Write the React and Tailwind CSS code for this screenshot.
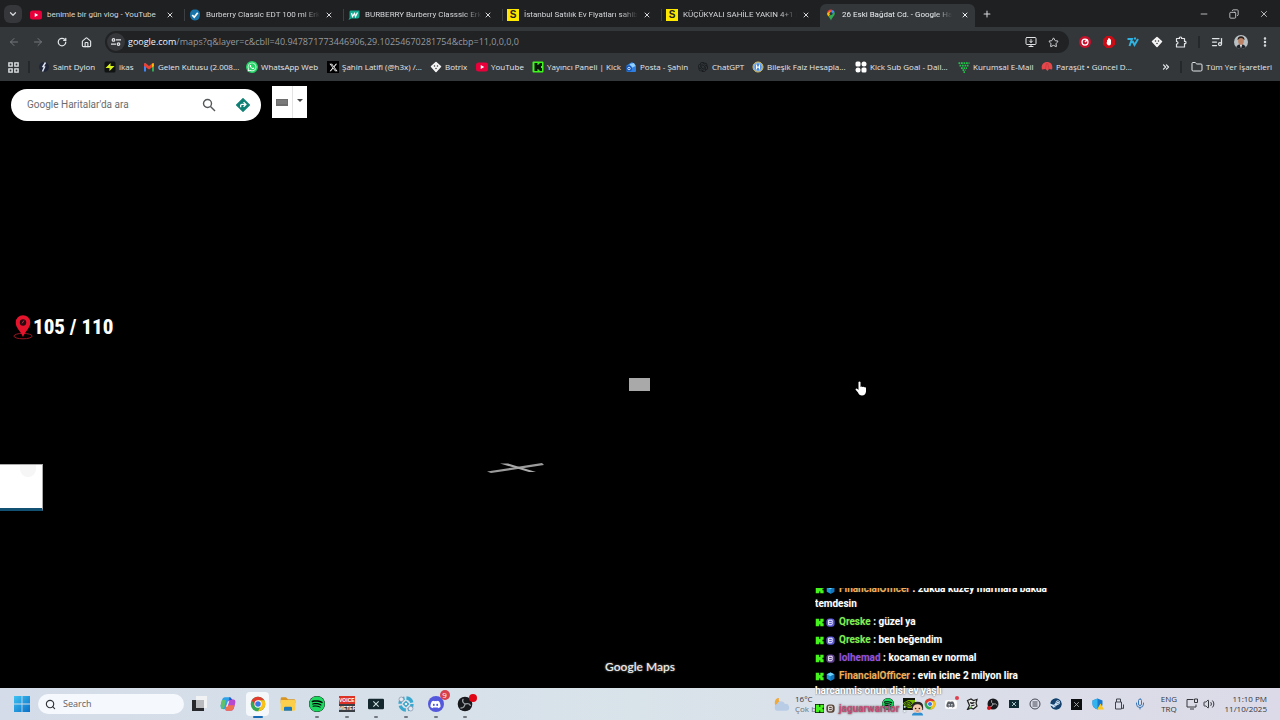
import {
  ArrowLeft, ArrowRight, ChevronDown, ChevronsRight, Copy, Folder, House, ListMusic, Mic, Minus,
  MonitorDown, EllipsisVertical, Plus, RotateCw, Search, Star, Volume2, X,
} from "lucide-react";
import { FaXTwitter, FaDiscord, FaSpotify, FaSteam, FaWhatsapp } from "react-icons/fa6";
import { SiOpenai, SiNvidia } from "react-icons/si";

function YouTubeIcon({ className = "size-3" }) {
  return (
    <svg viewBox="0 0 24 24" className={className}>
      <rect x="0" y="3" width="24" height="18" rx="5" fill="#e8003a" />
      <path d="M9.5 8v8l7-4z" fill="#fff" />
    </svg>
  );
}

function KickIcon({ className = "size-3", boxed = false }) {
  return (
    <svg viewBox="0 0 24 24" className={className}>
      {boxed && <rect width="24" height="24" fill="#0b0f0b" />}
      <path d="M2 2h9v6h3V2h9v8h-3v4h3v8h-9v-5h-3v5H2z" fill="#45f41c" />
    </svg>
  );
}

function KickTileIcon() {
  return (
    <svg viewBox="0 0 24 24" className="size-3">
      <rect x="1" y="1" width="22" height="22" rx="2" fill="#3ef51c" />
      <path d="M5 4h6v4h2V6h2V4h5v6h-2v4h2v6h-5v-2h-2v-2h-2v4H5z" fill="#0a160a" />
    </svg>
  );
}

function TickIcon() {
  return (
    <svg viewBox="0 0 24 24" className="size-3">
      <path d="M12 1c7 0 10 4 10 10s-3 12-10 12S2 17 2 11 5 1 12 1z" fill="#1873a8" />
      <path d="M6.500 12l4 4.500 7-9" fill="none" stroke="#fff" strokeWidth="3.500" />
    </svg>
  );
}

function WatsonsIcon() {
  return (
    <svg viewBox="0 0 24 24" className="size-3">
      <path d="M5 3h18v12q0 4-4 4H7l-6 3 2-5V6q0-3 2-3z" fill="#15a88f" />
      <path d="M7 8l2 7 4-6 2 6 4-8" fill="none" stroke="#fff" strokeWidth="2.500" />
    </svg>
  );
}

function SahibindenIcon() {
  return (
    <span className="flex size-3 items-center justify-center bg-[#ffe800] font-['Liberation_Sans'] text-[10px] leading-none font-bold text-[#222]">
      S
    </span>
  );
}

function MapsPinIcon() {
  return (
    <svg viewBox="0 0 24 24" className="size-3">
      <path d="M12 1C7 1 4 5 4 9l4 2 7-9q-1-1-3-1z" fill="#e94435" />
      <path d="M15 2L9 9l4 2 6-5q-1-3-4-4z" fill="#4a90f0" />
      <path d="M4 9q0 3 3 6l7-9-5-1z" fill="#fbbc04" />
      <path d="M19 6c3 6-4 9-7 17-1-3-3-5-5-8z" fill="#34a853" />
      <circle cx="12" cy="9" r="3" fill="#24334e" />
    </svg>
  );
}

function SparkIcon() {
  return (
    <svg viewBox="0 0 24 24" className="size-3">
      <circle cx="12" cy="12" r="10" fill="#20263a" />
      <path d="M15 3l-5 8 3 1-4 9" fill="none" stroke="#dfe4ef" strokeWidth="3" />
    </svg>
  );
}

function IkasIcon() {
  return (
    <svg viewBox="0 0 24 24" className="size-3">
      <rect x="1" y="1" width="22" height="22" rx="3" fill="#101312" />
      <path d="M13 4L3 14h8v6l10-10h-8z" fill="#d9f21c" />
    </svg>
  );
}

function GmailIcon() {
  return (
    <svg viewBox="0 0 24 24" className="size-3">
      <path d="M2 21V5h4v16z" fill="#4285f4" />
      <path d="M18 21V5h4v16z" fill="#34a853" />
      <path d="M2 5l3-1 7 6 7-6 3 1v5l-10 7L2 10z" fill="#ea4335" />
      <path d="M18 6l3-2 1 6-4 3z" fill="#fbbc04" />
    </svg>
  );
}

function XTile() {
  return (
    <span className="flex size-3 items-center justify-center bg-black text-[9px] text-white">
      <FaXTwitter />
    </span>
  );
}

function WhatsAppIcon() {
  return (
    <span className="flex size-3 items-center justify-center rounded-full bg-[#25d366] text-[10px] text-white">
      <FaWhatsapp />
    </span>
  );
}

function BotrixIcon({ className = "size-3" }) {
  return (
    <svg viewBox="0 0 24 24" className={className}>
      <path d="M12 3l9 8-9 10-9-10z" fill="#f4f4f4" stroke="#f4f4f4" strokeWidth="3" strokeLinejoin="round" />
      <circle cx="9" cy="10" r="1.500" fill="#333" />
      <circle cx="15" cy="10" r="1.500" fill="#333" />
      <circle cx="12" cy="15" r="1.500" fill="#333" />
    </svg>
  );
}

function PostaIcon() {
  return (
    <svg viewBox="0 0 24 24" className="size-3">
      <path d="M3 9L14 2l8 7v11q0 2-2 2H5q-2 0-2-2z" fill="#2f7fe0" />
      <path d="M9 6l9-2 3 6-8 4z" fill="#8fd0ff" />
      <circle cx="8" cy="15" r="6" fill="#1256b8" />
      <circle cx="8" cy="15" r="2.500" fill="none" stroke="#fff" strokeWidth="1.500" />
    </svg>
  );
}

function HesapIcon() {
  return (
    <svg viewBox="0 0 24 24" className="size-3">
      <circle cx="12" cy="12" r="10" fill="#3b82d8" stroke="#e4c45a" strokeWidth="2" />
      <circle cx="12" cy="12" r="8" fill="none" stroke="#dbe9fa" />
      <path d="M9 7v10M15 7v10M9 12h6" stroke="#fff" strokeWidth="2.500" />
    </svg>
  );
}

function GoalIcon() {
  return (
    <svg viewBox="0 0 24 24" className="size-3" fill="#fff">
      <rect x="1" y="1" width="10" height="10" rx="3" />
      <circle cx="18" cy="6" r="5" />
      <circle cx="6" cy="18" r="5" />
      <rect x="13" y="13" width="10" height="10" rx="3" />
    </svg>
  );
}

function DotsMailIcon() {
  return (
    <svg viewBox="0 0 24 24" className="size-3">
      <path
        d="M1 4h22M3 9h18M6 14h12M9 18h6M11 22h3"
        stroke="#1fc34a"
        strokeWidth="3.500"
        strokeDasharray="3.500 1.500"
      />
    </svg>
  );
}

function ParasutIcon() {
  return (
    <svg viewBox="0 0 24 24" className="size-3">
      <path d="M2 17C-1 5 8 1 14 2c8 1 10 9 8 15l-6-1-3 4-4-4z" fill="#e5484b" />
      <path d="M9 16L11 4M16 16L13 4" stroke="#b92f38" strokeWidth="1" />
    </svg>
  );
}

function ExtensionsIcon() {
  return (
    <svg viewBox="0 0 24 24" className="size-3" fill="none" stroke="currentColor" strokeWidth="2.400">
      <path
        d="M3 5h6q-1-3 2-3t2 3h6v6q3-1 3 2t-3 2v7H3v-6q3 0 3-2.500T3 11z"
        strokeLinejoin="round"
      />
    </svg>
  );
}

function ChromeIcon({ className = "size-4" }) {
  return (
    <svg viewBox="0 0 24 24" className={className}>
      <circle cx="12" cy="12" r="11" fill="#34a853" />
      <path d="M2.500 6.500A11 11 0 0 1 21.500 6.500H12L7.500 14.500z" fill="#e33b2e" />
      <path d="M21.500 6.500A11 11 0 0 1 12 23l4.500-8.500L12 6.500z" fill="#fbc116" />
      <circle cx="12" cy="12" r="5.500" fill="#fff" />
      <circle cx="12" cy="12" r="4.200" fill="#3b78e7" />
    </svg>
  );
}

function WindowsIcon() {
  return (
    <svg viewBox="0 0 16 16" className="size-4">
      <defs>
        <linearGradient id="win" x1="0" y1="0" x2="1" y2="1">
          <stop offset="0%" stopColor="#3fc3f2" />
          <stop offset="100%" stopColor="#0a6fc7" />
        </linearGradient>
      </defs>
      <path d="M0 0h7.600v7.600H0zM8.400 0H16v7.600H8.400zM0 8.400h7.600V16H0zM8.400 8.400H16V16H8.400z" fill="url(#win)" />
    </svg>
  );
}

function TaskViewIcon() {
  return (
    <svg viewBox="0 0 16 16" className="size-4">
      <rect x="5" y="0" width="11" height="12" fill="#f1f2f4" />
      <path d="M1 4h4v8h8v3H1z" fill="#26282b" />
      <rect x="5" y="4" width="8" height="8" fill="#b9babd" />
    </svg>
  );
}

function CopilotIcon() {
  return (
    <svg viewBox="0 0 24 24" className="size-4">
      <path d="M7 2h7q2 0 3 3l1 3h-6L9 18q-1 2-3 2-6 0-5-6l2-8q1-4 4-4z" fill="#2da3e8" />
      <path d="M1 14l2-8h6l-2 9q-2 6-5 4z" fill="#61c06a" />
      <path d="M17 22h-7q-2 0-2-3l4-11q1-3 4-3h2q6 0 5 5l-2 8q-1 4-4 4z" fill="#b64bd0" />
      <path d="M8 19l2-5h12l-2 5q-1 3-4 3h-6q-2 0-2-3z" fill="#f0714f" />
      <path d="M14 2h1q2 0 3 4h-4z" fill="#2456c6" />
      <path d="M12 8h2l-3 8H9z" fill="#eef1f5" />
    </svg>
  );
}

function ExplorerIcon() {
  return (
    <svg viewBox="0 0 24 24" className="size-4">
      <path d="M1 4q0-2 2-2h6l3 3h9q2 0 2 2v4H1z" fill="#d9951f" />
      <rect x="1" y="6" width="22" height="16" rx="2" fill="#fbcf4b" />
      <path d="M6 22v-4q0-2 2-2h8q2 0 2 2v4z" fill="#1c78bd" />
    </svg>
  );
}

function VoicemeeterIcon() {
  return (
    <span className="flex size-4 flex-col overflow-hidden bg-[#3a3f46] text-center font-['Liberation_Sans'] text-[5px] leading-[8px] font-bold text-white">
      <span className="bg-[#dd3327]">VOICE</span>
      <span>METER</span>
    </span>
  );
}

function ScreenXIcon() {
  return (
    <svg viewBox="0 0 24 24" className="size-4">
      <rect x="0" y="4" width="24" height="16" rx="2" fill="#14272c" />
      <path d="M8 8l8 8M16 8l-8 8" stroke="#cfe0e0" strokeWidth="1.600" />
    </svg>
  );
}

function SwirlIcon() {
  return (
    <svg viewBox="0 0 24 24" className="size-4">
      <circle cx="12" cy="12" r="9" fill="none" stroke="#39a8cf" strokeWidth="5" strokeDasharray="11 3" />
      <path d="M12 7l5 5-5 5-5-5z" fill="#2f9fc9" />
      <circle cx="12" cy="12" r="2" fill="#e6edf3" />
      <circle cx="5" cy="5" r="3.500" fill="#e4e9f1" stroke="#8190a5" />
      <circle cx="19" cy="19" r="3.500" fill="#e4e9f1" stroke="#8190a5" />
    </svg>
  );
}

function DiscordIcon() {
  return (
    <span className="relative flex size-4 items-center justify-center rounded-full bg-[#5358dd] text-[11px] text-white">
      <FaDiscord />
      <span className="absolute -top-1.5 -right-1.5 flex size-2.5 items-center justify-center rounded-full bg-[#d8404c] text-[8px] leading-none">
        9
      </span>
    </span>
  );
}

function ObsIcon({ className = "size-4" }) {
  return (
    <svg viewBox="0 0 24 24" className={className}>
      <circle cx="12" cy="12" r="11" fill="#17181b" />
      <path
        d="M12 12q-5-3-3-7M12 12q6-2 8 2M12 12q-1 6-6 6"
        fill="none"
        stroke="#9a9da3"
        strokeWidth="2"
        strokeLinecap="round"
      />
    </svg>
  );
}

function RecordingIcon() {
  return (
    <span className="relative">
      <ObsIcon />
      <span className="absolute -top-0.5 -right-1 size-2 rounded-full bg-[#e10615]" />
    </span>
  );
}

function CubeIcon() {
  return (
    <svg viewBox="0 0 24 24" className="size-[9px]">
      <path d="M12 1l10 5v12l-10 5L2 18V6z" fill="#1d96d8" />
      <path d="M12 1l10 5-10 5L2 6z" fill="#70d2fb" />
      <path d="M12 11l10-5v12l-10 5z" fill="#1574bb" />
    </svg>
  );
}

function BadgeIcon({ fill }) {
  return (
    <svg viewBox="0 0 24 24" className="size-[9px]">
      <rect x="1" y="1" width="22" height="22" rx="8" fill={fill} />
      <path d="M7 6h9q2 2 0 5 2 4-1 7H7z" fill="none" stroke="#fff" strokeWidth="2.500" />
      <path d="M8 12h7" stroke="#fff" strokeWidth="2" />
    </svg>
  );
}

const TABS = [
  { title: "benimle bir gün vlog - YouTube", Icon: YouTubeIcon },
  { title: "Burberry Classic EDT 100 ml Erk", Icon: TickIcon, fade: true },
  { title: "BURBERRY Burberry Classsic Erk", Icon: WatsonsIcon, fade: true },
  { title: "İstanbul Satılık Ev Fiyatları sahib", Icon: SahibindenIcon, fade: true },
  { title: "KÜÇÜKYALI SAHİLE YAKIN 4+1 l", Icon: SahibindenIcon, fade: true },
  { title: "26 Eski Bağdat Cd. - Google Ha", Icon: MapsPinIcon, fade: true, active: true },
];

function TabStrip() {
  return (
    <header className="flex h-[27px] items-end bg-[#1f2022] text-[#d5d7da]">
      <div className="flex h-full w-[25px] shrink-0 items-center justify-center">
        <button type="button" aria-label="Search tabs" className="flex size-[18px] items-center justify-center rounded-md bg-[#35373a]">
          <ChevronDown className="size-2.5" strokeWidth={3} />
        </button>
      </div>
      {TABS.map(({ title, Icon, active, fade }, i) => (
        <div
          key={title}
          className={`flex h-[23px] items-center gap-[5px] pb-0.5 ${
            active ? "w-[155px] rounded-t-md bg-[#33373a] pr-1.5 text-[#eceef0]" : "w-[159px] pr-2.5"
          }`}
        >
          <div className="flex items-center gap-1">
            <span className={`h-3 w-px ${i === 0 || active ? "" : "bg-[#3d4043]"}`} />
            <Icon />
          </div>
          <a href="#tab" className="min-w-0 flex-1 font-['Roboto',sans-serif] text-[8px] leading-3 whitespace-nowrap">
            <span className={fade ? "inline-block mask-r-from-85%" : ""}>{title}</span>
          </a>
          <button type="button" aria-label={`Close ${title}`}>
            <X className="size-2" strokeWidth={3} />
          </button>
        </div>
      ))}
      <button type="button" aria-label="New tab" className="flex h-full w-6 items-center justify-center">
        <Plus className="size-2.5" strokeWidth={2.500} />
      </button>
      <div className="ml-auto flex h-full items-center gap-5 pr-[11px]">
        <button type="button" aria-label="Minimize"><Minus className="size-2.5" /></button>
        <button type="button" aria-label="Restore"><Copy className="size-2.5 -scale-x-100" /></button>
        <button type="button" aria-label="Close"><X className="size-2.5" /></button>
      </div>
    </header>
  );
}

function ToolButton({ label, className = "", children }) {
  return (
    <button type="button" aria-label={label} className={`flex size-6 shrink-0 items-center justify-center ${className}`}>
      {children}
    </button>
  );
}

function Toolbar() {
  return (
    <div className="flex h-[30px] items-center bg-[#33373a] pr-[3px] pl-0.5 text-[#e2e4e7]">
      <ToolButton label="Back" className="text-[#74787c]"><ArrowLeft className="size-3" /></ToolButton>
      <ToolButton label="Forward" className="text-[#74787c]"><ArrowRight className="size-3" /></ToolButton>
      <ToolButton label="Reload"><RotateCw className="size-2.5" strokeWidth={3} /></ToolButton>
      <ToolButton label="Home"><House className="size-[11px]" strokeWidth={2.500} /></ToolButton>
      <div className="mr-1 ml-[7px] flex h-[22px] min-w-0 flex-1 items-center rounded-full bg-[#202224] pr-1.5 pl-0.5">
        <button type="button" aria-label="Site information" className="flex size-[18px] items-center justify-center rounded-full bg-[#35373a]">
          <svg viewBox="0 0 12 12" className="size-2.5" fill="none" stroke="currentColor" strokeWidth="1.500">
            <circle cx="3" cy="3.500" r="1.500" />
            <path d="M6 3.500h6M0 8.500h6" />
            <circle cx="9" cy="8.500" r="1.500" />
          </svg>
        </button>
        <a href="#url" className="ml-[3px] flex-1 truncate text-[9px] leading-4 text-[#979a9e]">
          <span className="text-[#f1f3f4]">google.com</span>
          /maps?q&amp;layer=c&amp;cbll=40.947871773446906,29.10254670281754&amp;cbp=11,0,0,0,0
        </a>
        <div className="flex gap-0.5">
          <button type="button" aria-label="Install" className="flex h-6 w-5 items-center justify-center">
            <MonitorDown className="size-3" />
          </button>
          <button type="button" aria-label="Bookmark" className="flex h-6 w-5 items-center justify-center">
            <Star className="size-[11px]" />
          </button>
        </div>
      </div>
      <ToolButton label="Recorder">
        <svg viewBox="0 0 24 24" className="size-3">
          <circle cx="12" cy="12" r="12" fill="#c5102c" />
          <circle cx="12" cy="12" r="6" fill="none" stroke="#fff" strokeWidth="2.500" />
          <path d="M12 12l5-5" stroke="#fff" strokeWidth="3" />
        </svg>
      </ToolButton>
      <ToolButton label="Ad blocker">
        <svg viewBox="0 0 24 24" className="size-3">
          <path d="M7 0h10l7 7v10l-7 7H7l-7-7V7z" fill="#c90c16" />
          <path d="M8 12V8q1-1 2 0V5q1-1 2 0 1-1 2 0v2q1-1 2 0v8q0 4-4 4-3 0-5-5z" fill="#fff" />
        </svg>
      </ToolButton>
      <ToolButton label="7TV">
        <svg viewBox="0 0 24 24" className="size-3" fill="none" stroke="#2fb2df" strokeWidth="4">
          <path d="M1 6h9L5 20M11 10l4 8 7-12M14 5h4" />
        </svg>
      </ToolButton>
      <ToolButton label="Botrix"><BotrixIcon /></ToolButton>
      <ToolButton label="Extensions"><ExtensionsIcon /></ToolButton>
      <div className="mx-[5px] h-3 w-0.5 shrink-0 bg-[#25282a]" />
      <ToolButton label="Media"><ListMusic className="size-3" strokeWidth={2.500} /></ToolButton>
      <ToolButton label="Profile">
        <svg viewBox="0 0 24 24" className="size-[14px] rounded-full">
          <rect width="24" height="24" fill="#b9c0c4" />
          <path d="M3 24q1-8 9-8t9 8z" fill="#20242b" />
          <path d="M10 16l2 7 2-7z" fill="#fff" />
          <ellipse cx="12" cy="10" rx="5" ry="7" fill="#bd8467" />
          <path d="M6 9q0-7 6-7t6 7q-3-4-6-4T6 9z" fill="#2a211e" />
        </svg>
      </ToolButton>
      <ToolButton label="Menu"><EllipsisVertical className="size-3" strokeWidth={3} /></ToolButton>
    </div>
  );
}

const BOOKMARKS = [
  { title: "Saint Dylon", Icon: SparkIcon, width: "w-[66px]" },
  { title: "ikas", Icon: IkasIcon, width: "w-[39px]" },
  { title: "Gelen Kutusu (2.008...", Icon: GmailIcon, width: "w-[103px]" },
  { title: "WhatsApp Web", Icon: WhatsAppIcon, width: "w-[81px]" },
  { title: "Şahin Latifi (@h3x) /...", Icon: XTile, width: "w-[103px]" },
  { title: "Botrix", Icon: BotrixIcon, width: "w-[46px]" },
  { title: "YouTube", Icon: YouTubeIcon, width: "w-[56px]" },
  { title: "Yayıncı Paneli | Kick", Icon: KickTileIcon, width: "w-[93px]" },
  { title: "Posta - Şahin", Icon: PostaIcon, width: "w-[72px]" },
  { title: "ChatGPT", Icon: () => <SiOpenai className="size-3 p-px text-[#15181a]" />, width: "w-[55px]" },
  { title: "Bileşik Faiz Hesapla...", Icon: HesapIcon, width: "w-[103px]" },
  { title: "Kick Sub Goal - Dail...", Icon: GoalIcon, width: "w-[103px]" },
  { title: "Kurumsal E-Mail", Icon: DotsMailIcon, width: "w-[83px]" },
  { title: "Paraşüt • Güncel D...", Icon: ParasutIcon, width: "w-[103px]" },
];

function BookmarksBar() {
  return (
    <nav className="flex h-6 items-center bg-[#33373a] px-2 pb-1 text-[8px] leading-3 whitespace-nowrap text-[#e5e7ea]">
      <button type="button" aria-label="Apps" className="shrink-0">
        <svg viewBox="0 0 12 12" className="size-[11px]" fill="none" stroke="currentColor" strokeWidth="1.500">
          <path d="M1 1h3.500v3.500H1zM7.500 1H11v3.500H7.500zM1 7.500h3.500V11H1zM7.500 7.500H11V11H7.500z" />
        </svg>
      </button>
      <div className="mr-2 ml-[9px] h-3 w-0.5 shrink-0 bg-[#25282a]" />
      {BOOKMARKS.map(({ title, Icon, width }) => (
        <a key={title} href="#bookmark" className={`flex shrink-0 items-center gap-[3px] ${width}`}>
          <Icon />
          <span>{title}</span>
        </a>
      ))}
      <button type="button" aria-label="More bookmarks" className="ml-auto">
        <ChevronsRight className="size-2.5" strokeWidth={3} />
      </button>
      <div className="mx-[9px] h-3 w-0.5 shrink-0 bg-[#25282a]" />
      <a href="#all" className="flex items-center gap-[3px]">
        <Folder className="size-3" />
        Tüm Yer İşaretleri
      </a>
    </nav>
  );
}

function MapSearch() {
  return (
    <div className="flex items-start gap-[11px] pl-[11px] font-['Roboto',sans-serif]">
      <div className="pt-2">
        <form className="flex h-8 w-[250px] items-center rounded-full bg-white pr-[11px] pl-4">
          <input
            type="text"
            aria-label="Google Haritalar'da ara"
            placeholder="Google Haritalar'da ara"
            className="min-w-0 flex-1 text-[10px] leading-4 text-[#333] outline-none placeholder:text-[#6a6d70]"
          />
          <button type="button" aria-label="Ara" className="mr-5">
            <svg viewBox="0 0 14 14" className="size-[14px]" fill="none" stroke="#55585b" strokeWidth="1.400">
              <circle cx="5.500" cy="5.500" r="4" />
              <path d="M8.500 8.500L13 13" />
            </svg>
          </button>
          <button type="button" aria-label="Yol tarifi">
            <svg viewBox="0 0 24 24" className="size-[14px]">
              <path d="M12 1l11 11-11 11L1 12z" fill="#0d8074" stroke="#0d8074" strokeWidth="2" strokeLinejoin="round" />
              <path d="M8 16v-3q0-2 2-2h6M13 7l4 4-4 4" fill="none" stroke="#fff" strokeWidth="2.200" />
            </svg>
          </button>
        </form>
      </div>
      <div className="pt-[5px]">
        <button type="button" aria-label="Giriş araçları" className="flex h-8 w-[35px] bg-white">
          <span className="flex h-full w-[21px] items-center justify-center border-r border-[#e3e3e3]">
            <svg viewBox="0 0 12 7" className="h-[7px] w-3">
              <rect width="12" height="7" fill="#6d6d6d" />
              <path d="M1 2h10M1 4h10" stroke="#8f8f8f" strokeWidth="0.800" />
            </svg>
          </span>
          <span className="flex h-full flex-1 items-center justify-center pb-1">
            <svg viewBox="0 0 6 3" className="h-[3px] w-1.5">
              <path d="M0 0h6L3 3z" fill="#444" />
            </svg>
          </span>
        </button>
      </div>
    </div>
  );
}

function StreetView() {
  return (
    <main className="relative flex-1 bg-black">
      <MapSearch />
      <div className="absolute top-8 left-[13px] mt-[200px] flex items-center text-white">
        <svg viewBox="0 0 22 28" className="h-7 w-5">
          <ellipse cx="11" cy="24" rx="10" ry="3" fill="none" stroke="#a81726" />
          <path d="M11 25C8 18 3 15 3 9a8 8 0 0 1 16 0c0 6-5 9-8 16z" fill="#e3142b" />
          <circle cx="11" cy="9" r="3.500" fill="#260a10" />
          <path d="M10 10l2-3" stroke="#b9394b" />
        </svg>
        <span className="font-['Roboto_Condensed','Roboto',sans-serif] text-[21px] leading-7 font-extrabold whitespace-nowrap">
          105 / 110
        </span>
      </div>
      {/* minimap peek */}
      <div className="absolute top-[383px] left-0 h-[47px] w-[43px] overflow-hidden border-t border-r border-b-3 border-t-[#aaa] border-r-[#aaa] border-b-[#125172] bg-white">
        <div className="ml-5 h-3 w-4 rounded-b-full bg-[#f6f6f6]" />
      </div>
      <svg viewBox="0 0 58 12" className="absolute top-[381px] left-[486px] h-3 w-[58px]">
        <path d="M1 9.500L56 1l2 2L5 11z" fill="#9b9b9b" />
        <path d="M14 1.500h8l28 8.500h-7z" fill="#a9a9a9" />
      </svg>
      <div className="absolute top-[297px] left-[629px] h-[13px] w-[21px] bg-[#a9a9a9]" />
      <svg viewBox="0 0 12 16" className="absolute top-[300px] left-[855px] h-4 w-3">
        <path
          d="M3.500 1q1-1 2 0v5l1-.500 1 .500 1-.300 1 .600 1.500.200v4q-.500 4-4 4-3 0-4-3L.500 8.500Q1 7 2.500 8l1 1z"
          fill="#fff"
        />
      </svg>
      <p className="absolute inset-x-0 bottom-[13px] text-center font-['Lato',sans-serif] text-[12px] leading-4 font-medium text-[#ececec] text-shadow-[0_0_2px_#999]">
        Google Maps
      </p>
    </main>
  );
}

const RUNNING = [
  { name: "Task view", Icon: TaskViewIcon },
  { name: "Copilot", Icon: CopilotIcon },
  { name: "Chrome", Icon: ChromeIcon, active: true },
  { name: "File Explorer", Icon: ExplorerIcon },
  { name: "Spotify", Icon: () => <FaSpotify className="size-4 rounded-full bg-black text-[#1ed760]" />, open: true },
  { name: "Voicemeeter", Icon: VoicemeeterIcon, open: true },
  { name: "Screen X", Icon: ScreenXIcon, open: true },
  { name: "Capture", Icon: SwirlIcon, open: true },
  { name: "Discord", Icon: DiscordIcon, open: true },
  { name: "OBS", Icon: RecordingIcon, open: true },
];

const TRAY = [
  { name: "Spotify", icon: <FaSpotify className="size-3 rounded-full bg-black text-[#1ed760]" /> },
  { name: "NVIDIA", icon: <SiNvidia className="size-3 bg-[#10160a] text-[#76b900]" /> },
  { name: "Chrome", icon: <ChromeIcon className="size-3" /> },
  {
    name: "Discord",
    icon: (
      <span className="relative flex h-[9px] w-3 items-center justify-center rounded-xs bg-[#fafafa] text-[9px] text-[#5a5e65]">
        <FaDiscord />
        <span className="absolute -top-1 -right-0.5 size-1 rounded-full bg-[#e0404f]" />
      </span>
    ),
  },
  {
    name: "Creature",
    icon: (
      <svg viewBox="0 0 24 24" className="size-3">
        <path d="M3 5l7-3 5 3 7-2-2 7 2 6-7 6-5-2-7 3 4-8z" fill="#e9ebe8" stroke="#222" strokeWidth="2.500" />
        <path d="M8 9l4 2 5-2M10 16l7-2" stroke="#222" strokeWidth="2.500" />
        <circle cx="8" cy="19" r="2" fill="#67b44a" />
      </svg>
    ),
  },
  {
    name: "OBS",
    icon: (
      <span className="relative">
        <ObsIcon className="size-3" />
        <span className="absolute bottom-0 left-0 size-1 rounded-full bg-[#d6121d]" />
      </span>
    ),
  },
  {
    name: "Screen X",
    icon: (
      <svg viewBox="0 0 10 8" className="h-2 w-2.5">
        <rect width="10" height="8" fill="#112b35" />
        <path d="M3 2l4 4M7 2L3 6" stroke="#a7c6c9" />
      </svg>
    ),
  },
  {
    name: "Mixer",
    icon: (
      <svg viewBox="0 0 24 24" className="size-3" fill="none" stroke="#454952" strokeWidth="2">
        <circle cx="12" cy="12" r="10" />
        <path d="M7 8h10M7 12h10M7 16h10" />
      </svg>
    ),
  },
  { name: "Steam", icon: <FaSteam className="size-3 rounded-full bg-[#cfe3f5] text-[#15406c]" /> },
  {
    name: "X capture",
    icon: (
      <svg viewBox="0 0 12 12" className="size-[11px]">
        <rect width="12" height="12" fill="#0c0e10" />
        <path d="M3.500 3.500l5 5M8.500 3.500l-5 5" stroke="#abb0b3" />
      </svg>
    ),
  },
  {
    name: "Security",
    icon: (
      <svg viewBox="0 0 24 24" className="size-3">
        <path d="M11 1l10 4v7q0 7-10 11Q1 19 1 12V5z" fill="#1478cd" />
        <path d="M11 1v22Q1 19 1 12V5z" fill="#33b4ee" />
        <path d="M17 11l7 12H10z" fill="#fcc71f" />
      </svg>
    ),
  },
  {
    name: "USB",
    icon: (
      <svg viewBox="0 0 24 24" className="size-3" fill="none" stroke="#3f434b" strokeWidth="2">
        <path d="M7 8V2h8v6M5 8h12v14H5zM17 20l4 1V13" />
      </svg>
    ),
  },
  { name: "Microphone", icon: <Mic className="size-3 text-[#3b76b4]" /> },
];

function Taskbar() {
  return (
    <footer className="flex h-8 items-center bg-linear-to-r from-[#d3dce8] via-[#d9e3ea] to-[#dcdae8] pr-[13px] pl-[14px] text-[8px] leading-[10px] text-[#33363b]">
      <button type="button" aria-label="Start"><WindowsIcon /></button>
      <label className="ml-2 flex h-5 w-[146px] items-center gap-[7px] rounded-full bg-[#f5f8fc] px-[7px]">
        <Search className="size-[11px]" strokeWidth={2.500} />
        <input
          type="text"
          aria-label="Search"
          placeholder="Search"
          className="min-w-0 flex-1 text-[9px] leading-4 outline-none placeholder:text-[#5d6065]"
        />
      </label>
      <div className="grid w-[296px] grid-cols-10">
        {RUNNING.map(({ name, Icon, active, open }) => (
          <button key={name} type="button" aria-label={name} className="flex flex-col items-center pt-0.5">
            <span className={`flex h-6 w-[23px] items-center justify-center rounded-sm ${active ? "bg-[#f5f8fb]" : ""}`}>
              <Icon />
            </span>
            <span
              className={`h-0.5 rounded-full ${active ? "w-2.5 bg-[#1769b5]" : open ? "w-1 bg-[#73777e]" : "w-1"}`}
            />
          </button>
        ))}
      </div>
      <div className="ml-auto flex w-[104px] items-center gap-1">
        <svg viewBox="0 0 24 24" className="size-[18px]">
          <path d="M8 4a6 6 0 1 0 6 8 6 6 0 0 1-6-8z" fill="#f0a93b" />
          <path d="M5 21a5 5 0 0 1 0-9 6 6 0 0 1 11 0 4.500 4.500 0 0 1 2 9z" fill="#b9cce6" />
        </svg>
        <div className="whitespace-nowrap">
          <div>16°C</div>
          <div className="text-[#6b6f76]">Çok b</div>
        </div>
      </div>
      <div className="flex">
        {TRAY.map(({ name, icon }) => (
          <button key={name} type="button" aria-label={name} className="flex w-[21px] items-center justify-center">
            {icon}
          </button>
        ))}
      </div>
      <div className="ml-1.5 w-[26px] text-center">
        <div>ENG</div>
        <div>TRQ</div>
      </div>
      <div className="ml-1 flex items-center gap-[5px]">
        <svg viewBox="0 0 24 24" className="size-3" fill="none" stroke="currentColor" strokeWidth="2">
          <path d="M15 3H2v15h18v-5M8 22h8" />
          <path d="M17 2h6v7h-6z" />
        </svg>
        <Volume2 className="size-3" />
      </div>
      <div className="ml-2.5 w-[42px]">
        <div className="flex justify-end whitespace-nowrap">11:10 PM</div>
        <div className="flex justify-end whitespace-nowrap">11/10/2025</div>
      </div>
    </footer>
  );
}

const CHAT = [
  { user: "FinancialOfficer", color: "text-[#f0ad55]", badge: <CubeIcon />, text: "2dkda kuzey marmara bakda temdesin" },
  { user: "Qreske", color: "text-[#7bf04f]", badge: <BadgeIcon fill="#5a57d6" />, text: "güzel ya", id: "q1" },
  { user: "Qreske", color: "text-[#7bf04f]", badge: <BadgeIcon fill="#5a57d6" />, text: "ben beğendim", id: "q2" },
  { user: "lolhemad", color: "text-[#9550dd]", badge: <BadgeIcon fill="#5c3b8c" />, text: "kocaman ev normal" },
  { user: "FinancialOfficer", color: "text-[#f0ad55]", badge: <CubeIcon />, text: "evin icine 2 milyon lira harcanmis onun disi ev yaşlı", id: "f2" },
];

function ChatOverlay() {
  return (
    <section
      aria-label="Chat"
      className="pointer-events-none absolute bottom-0 left-[815px] flex h-[132px] w-[240px] flex-col justify-end gap-[3px] overflow-hidden pb-1 font-['Roboto',sans-serif] text-[10px] leading-[15px] font-bold text-white text-shadow-[0_0_2px_#333]"
    >
      {CHAT.map(({ user, color, badge, text, id }) => (
        <p key={id ?? user}>
          <span className="mr-1 inline-flex items-center gap-0.5 align-middle">
            <KickIcon className="size-[9px]" />
            {badge}
          </span>
          <span className={color}>{user}</span> : {text}
        </p>
      ))}
      <p className="flex items-center">
        <KickIcon className="size-[9px]" boxed />
        <span className="mr-1 ml-0.5"><BadgeIcon fill="#5a4638" /></span>
        <span className="text-[#c94f78]">jaguarwarrior</span>
        <span className="mx-1">:</span>
        <svg viewBox="0 0 24 24" className="size-[15px]">
          <path d="M3 23q0-5 9-5t9 5z" fill="#2f8fd0" />
          <path d="M3 9q0-8 9-8t9 8v5H3z" fill="#2a2527" />
          <ellipse cx="12" cy="12" rx="7.500" ry="7" fill="#f3c9ae" />
          <circle cx="9" cy="12" r="1.300" fill="#222" />
          <circle cx="15" cy="12" r="1.300" fill="#222" />
          <path d="M10 16h4" stroke="#8c3e3e" />
        </svg>
      </p>
    </section>
  );
}

export default function App() {
  return (
    <div className="relative flex min-h-screen flex-col overflow-hidden bg-black font-['Open_Sans',sans-serif]">
      <TabStrip />
      <Toolbar />
      <BookmarksBar />
      <StreetView />
      <Taskbar />
      <ChatOverlay />
    </div>
  );
}
